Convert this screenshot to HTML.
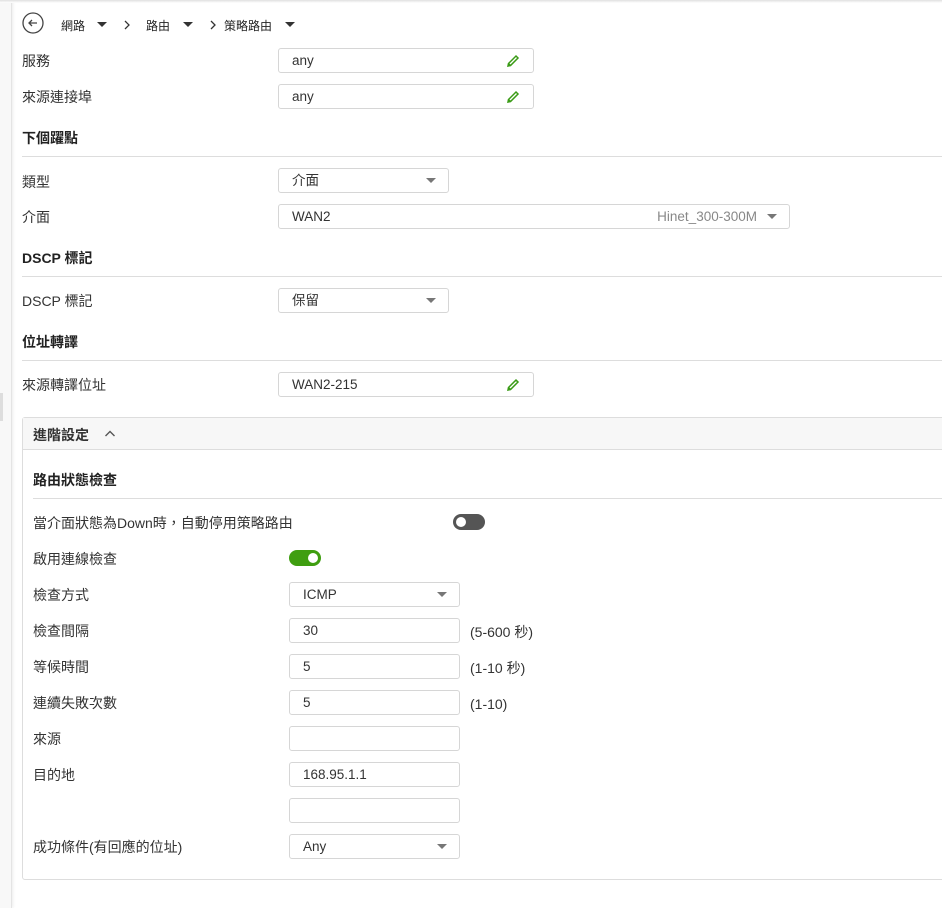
<!DOCTYPE html>
<html><head><meta charset="utf-8"><style>
*{box-sizing:border-box;margin:0;padding:0}
body{width:942px;height:908px;position:relative;background:#fff;font-family:"Liberation Sans","Noto Sans CJK TC",sans-serif;font-size:14px;color:#333;overflow:hidden}
.a{position:absolute}
.lbl{position:absolute;line-height:18px;white-space:nowrap}
.b{font-weight:bold;color:#222}
.in{position:absolute;border:1px solid #d6d6d6;border-radius:3px;background:#fff;padding-left:13px;line-height:24px;font-size:13.5px;color:#333}
.line{position:absolute;height:1px;background:#ddd}
.car{position:absolute;width:0;height:0;border-left:5px solid transparent;border-right:5px solid transparent;border-top:5px solid #777}
.pen{position:absolute;right:12px;top:4px}
</style></head><body>
<div class="a" style="left:0;top:0;width:12px;height:908px;background:#f8f8f8;border-right:1px solid #e4e4e4;box-shadow:1px 0 3px rgba(0,0,0,.08)"></div>
<div class="a" style="left:0;top:0;width:942px;height:3px;background:linear-gradient(#e0e0e0,#fff)"></div>
<div class="a" style="left:0;top:393px;width:3px;height:28px;background:#ddd"></div>
<svg class="a" style="left:22px;top:12px" width="22" height="22" viewBox="0 0 22 22"><circle cx="11" cy="11" r="10" fill="none" stroke="#444" stroke-width="1.3"/><path d="M15 11H7M10 8L7 11L10 14" fill="none" stroke="#444" stroke-width="1.3"/></svg>
<div class="lbl" style="left:61px;top:17px;font-size:12px;color:#222">網路</div>
<div class="car" style="left:97px;top:22px;border-top-color:#333"></div>
<svg class="a" style="left:123px;top:20px" width="8" height="10" viewBox="0 0 8 10"><path d="M2 1L6 5L2 9" fill="none" stroke="#333" stroke-width="1.3"/></svg>
<div class="lbl" style="left:146px;top:17px;font-size:12px;color:#222">路由</div>
<div class="car" style="left:183px;top:22px;border-top-color:#333"></div>
<svg class="a" style="left:209px;top:20px" width="8" height="10" viewBox="0 0 8 10"><path d="M2 1L6 5L2 9" fill="none" stroke="#333" stroke-width="1.3"/></svg>
<div class="lbl" style="left:224px;top:17px;font-size:12px;color:#222">策略路由</div>
<div class="car" style="left:285px;top:22px;border-top-color:#333"></div>

<div class="lbl" style="left:22px;top:52px">服務</div>
<div class="in" style="left:278px;top:48px;width:256px;height:25px">any<svg class="pen" width="16" height="16" viewBox="0 0 16 16"><path d="M3 13L3.5 10.5L11 3L13 5L5.5 12.5Z M3.5 10.5L5.5 12.5" fill="none" stroke="#3a9b16" stroke-width="1.5"/></svg></div>
<div class="lbl" style="left:22px;top:88px">來源連接埠</div>
<div class="in" style="left:278px;top:84px;width:256px;height:25px">any<svg class="pen" width="16" height="16" viewBox="0 0 16 16"><path d="M3 13L3.5 10.5L11 3L13 5L5.5 12.5Z M3.5 10.5L5.5 12.5" fill="none" stroke="#3a9b16" stroke-width="1.5"/></svg></div>

<div class="lbl b" style="left:22px;top:129px">下個躍點</div>
<div class="line" style="left:22px;top:156px;width:920px"></div>
<div class="lbl" style="left:22px;top:173px">類型</div>
<div class="in" style="left:278px;top:168px;width:171px;height:25px">介面<div class="car" style="left:147px;top:9px"></div></div>
<div class="lbl" style="left:22px;top:208px">介面</div>
<div class="in" style="left:278px;top:204px;width:512px;height:25px">WAN2<span class="a" style="right:32px;top:0;color:#888">Hinet_300-300M</span><div class="car" style="left:488px;top:9px"></div></div>

<div class="lbl b" style="left:22px;top:249px">DSCP 標記</div>
<div class="line" style="left:22px;top:276px;width:920px"></div>
<div class="lbl" style="left:22px;top:292px">DSCP 標記</div>
<div class="in" style="left:278px;top:288px;width:171px;height:25px">保留<div class="car" style="left:147px;top:9px"></div></div>

<div class="lbl b" style="left:22px;top:333px">位址轉譯</div>
<div class="line" style="left:22px;top:360px;width:920px"></div>
<div class="lbl" style="left:22px;top:376px">來源轉譯位址</div>
<div class="in" style="left:278px;top:372px;width:256px;height:25px">WAN2-215<svg class="pen" width="16" height="16" viewBox="0 0 16 16"><path d="M3 13L3.5 10.5L11 3L13 5L5.5 12.5Z M3.5 10.5L5.5 12.5" fill="none" stroke="#3a9b16" stroke-width="1.5"/></svg></div>

<div class="a" style="left:22px;top:417px;width:925px;height:463px;border:1px solid #ddd;border-radius:3px"></div>
<div class="a" style="left:23px;top:418px;width:920px;height:32px;background:#f7f7f7;border-bottom:1px solid #ddd"></div>
<div class="lbl b" style="left:33px;top:426px;color:#333">進階設定</div>
<svg class="a" style="left:104px;top:429px" width="12" height="10" viewBox="0 0 12 10"><path d="M1.5 7L6 2.5L10.5 7" fill="none" stroke="#555" stroke-width="1.4"/></svg>

<div class="lbl b" style="left:33px;top:471px">路由狀態檢查</div>
<div class="line" style="left:33px;top:498px;width:909px"></div>
<div class="lbl" style="left:33px;top:514px">當介面狀態為Down時，自動停用策略路由</div>
<div class="a" style="left:453px;top:514px;width:32px;height:16px;border-radius:8px;background:#555"><div class="a" style="left:3px;top:3px;width:10px;height:10px;border-radius:5px;background:#fff"></div></div>
<div class="lbl" style="left:33px;top:550px">啟用連線檢查</div>
<div class="a" style="left:289px;top:550px;width:32px;height:16px;border-radius:8px;background:#3f9e10"><div class="a" style="left:19px;top:3px;width:10px;height:10px;border-radius:5px;background:#fff"></div></div>

<div class="lbl" style="left:33px;top:586px">檢查方式</div>
<div class="in" style="left:289px;top:582px;width:171px;height:25px">ICMP<div class="car" style="left:147px;top:9px"></div></div>
<div class="lbl" style="left:33px;top:622px">檢查間隔</div>
<div class="in" style="left:289px;top:618px;width:171px;height:25px">30</div>
<div class="lbl" style="left:470px;top:623px">(5-600 秒)</div>
<div class="lbl" style="left:33px;top:658px">等候時間</div>
<div class="in" style="left:289px;top:654px;width:171px;height:25px">5</div>
<div class="lbl" style="left:470px;top:659px">(1-10 秒)</div>
<div class="lbl" style="left:33px;top:694px">連續失敗次數</div>
<div class="in" style="left:289px;top:690px;width:171px;height:25px">5</div>
<div class="lbl" style="left:470px;top:695px">(1-10)</div>
<div class="lbl" style="left:33px;top:730px">來源</div>
<div class="in" style="left:289px;top:726px;width:171px;height:25px"></div>
<div class="lbl" style="left:33px;top:766px">目的地</div>
<div class="in" style="left:289px;top:762px;width:171px;height:25px">168.95.1.1</div>
<div class="in" style="left:289px;top:798px;width:171px;height:25px"></div>
<div class="lbl" style="left:33px;top:838px">成功條件(有回應的位址)</div>
<div class="in" style="left:289px;top:834px;width:171px;height:25px">Any<div class="car" style="left:147px;top:9px"></div></div>
</body></html>
